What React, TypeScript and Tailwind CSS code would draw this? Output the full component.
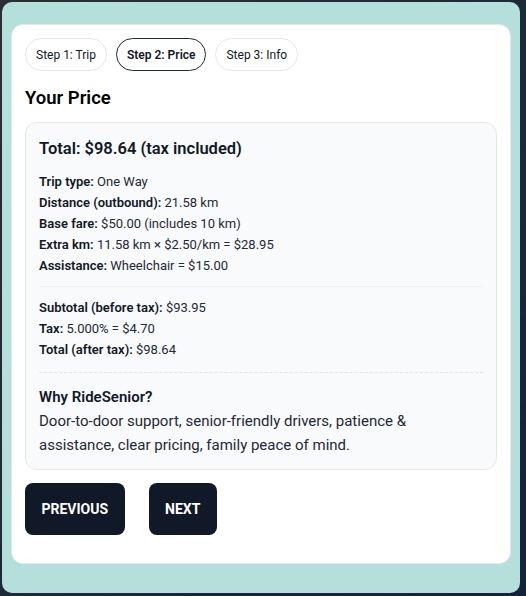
import React from 'react';

// Booking wizard, step 2: price breakdown
const steps = [
    { label: 'Step 1: Trip', active: false },
    { label: 'Step 2: Price', active: true },
    { label: 'Step 3: Info', active: false },
];

const tripLines: [string, string][] = [
    ['Trip type:', 'One Way'],
    ['Distance (outbound):', '21.58 km'],
    ['Base fare:', '$50.00 (includes 10 km)'],
    ['Extra km:', '11.58 km × $2.50/km = $28.95'],
    ['Assistance:', 'Wheelchair = $15.00'],
];

const totalLines: [string, string][] = [
    ['Subtotal (before tax):', '$93.95'],
    ['Tax:', '5.000% = $4.70'],
    ['Total (after tax):', '$98.64'],
];

function Line({ label, value }: { label: string; value: string }) {
    return (
        <p className="text-[13px] leading-[21px] text-[#1f2937]">
            <span className="font-semibold text-[#111827]">{label}</span> {value}
        </p>
    );
}

export default function App() {
    return (
        <div className="min-h-screen bg-gradient-to-br from-[#2b2f33] via-[#1d2a38] to-[#15233a] px-[2px] pt-[2px] pb-[4px] font-['Roboto',sans-serif]">
            <div className="rounded-[10px] bg-[#b5dfdb] px-[9px] pt-[22px] pb-[29px] mr-[4px]">
                <div className="rounded-xl border border-[#e6e8ec] bg-white px-[13px] pt-[13px] pb-[28px]">
                    {/* Step tabs */}
                    <div className="flex gap-[9px]">
                        {steps.map((s) => (
                            <div
                                key={s.label}
                                className={`flex h-[33px] items-center rounded-full border px-[10px] text-[12px] text-[#111827] ${
                                    s.active ? 'border-[#1f2937] font-semibold' : 'border-[#e5e7eb]'
                                }`}
                            >
                                {s.label}
                            </div>
                        ))}
                    </div>

                    <h2 className="mt-[15px] text-[18.5px] font-semibold leading-[24px] text-black">Your Price</h2>

                    {/* Price breakdown */}
                    <div className="mt-[12px] rounded-xl border border-[#e5e7eb] bg-[#f8fafc] px-[13px] pt-[14px] pb-[12px]">
                        <h3 className="text-[16.5px] font-semibold leading-[24px] text-[#111827]">Total: $98.64 (tax included)</h3>
                        <div className="mt-[10px]">
                            {tripLines.map(([l, v]) => (
                                <Line key={l} label={l} value={v} />
                            ))}
                        </div>
                        <hr className="mt-[10px] mb-[10px] border-t border-[#f0f2f5]" />
                        <div>
                            {totalLines.map(([l, v]) => (
                                <Line key={l} label={l} value={v} />
                            ))}
                        </div>
                        <div className="mt-[12px] border-t border-dashed border-[#e2e5ea]" />
                        <h4 className="mt-[13px] text-[15px] font-semibold leading-[23px] text-[#111827]">Why RideSenior?</h4>
                        <p className="max-w-[380px] text-[15px] leading-[24px] text-[#1f2937]">
                            Door-to-door support, senior-friendly drivers, patience &amp; assistance, clear pricing, family peace of mind.
                        </p>
                    </div>

                    {/* Navigation */}
                    <div className="mt-[13px] flex gap-[24px]">
                        <button className="h-[52px] rounded-lg bg-[#111827] px-[16.5px] text-[14px] font-bold text-white">PREVIOUS</button>
                        <button className="h-[52px] rounded-lg bg-[#111827] px-[16.5px] text-[14px] font-bold text-white">NEXT</button>
                    </div>
                </div>
            </div>
        </div>
    );
}
